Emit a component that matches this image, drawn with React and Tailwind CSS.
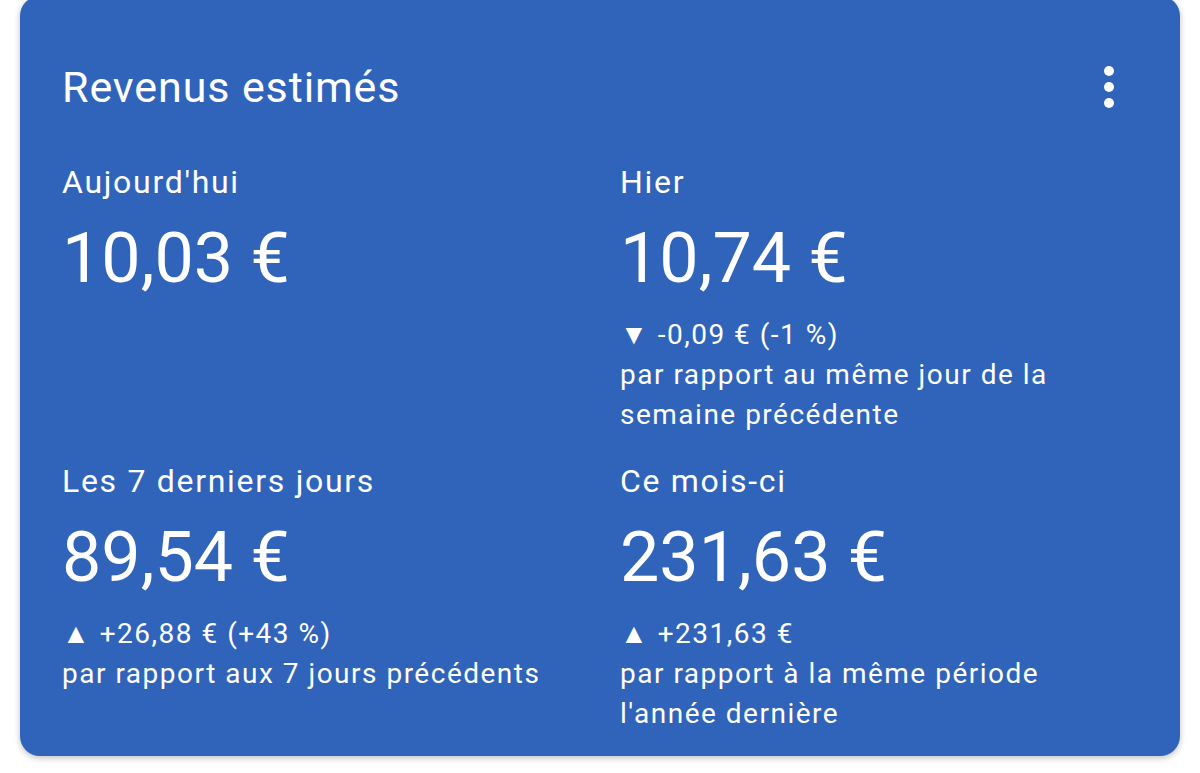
import React from "react";

function Section({ label, value, change, sub }) {
  return (
    <div className="flex flex-col">
      <div className="text-[32px] leading-[40px] tracking-[1.7px]">{label}</div>
      <div className="mt-[16px] text-[70px] leading-[80px] tracking-[0px]">{value}</div>
      {change && (
        <div className="mt-[17px] text-[28px] leading-[40px] tracking-[1.5px]">
          <div>{change}</div>
          {sub.map((s, i) => (
            <div key={i}>{s}</div>
          ))}
        </div>
      )}
    </div>
  );
}

export default function App() {
  return (
    <div className="w-[1200px] h-[773px] bg-white overflow-hidden" style={{ fontFamily: "Roboto, 'Liberation Sans', sans-serif" }}>
      <div className="mx-[20px] -mt-[4px] rounded-[20px] bg-[#3063BA] text-white shadow-[0_2px_6px_rgba(0,0,0,0.25)] pl-[42px] pr-[42px] pt-[65px] pb-[22px]">
        <div className="flex items-center justify-between">
          <div className="text-[43px] leading-[52px] tracking-[0.9px]">Revenus estimés</div>
          <div className="flex flex-col items-center gap-[6px] mr-[24px]">
            <span className="w-[10px] h-[10px] rounded-full bg-white" />
            <span className="w-[10px] h-[10px] rounded-full bg-white" />
            <span className="w-[10px] h-[10px] rounded-full bg-white" />
          </div>
        </div>
        <div className="mt-[49px] grid grid-cols-2 gap-x-[40px] gap-y-[26px]">
          <Section label="Aujourd'hui" value="10,03 €" />
          <Section
            label="Hier"
            value="10,74 €"
            change="▼ -0,09 € (-1 %)"
            sub={["par rapport au même jour de la", "semaine précédente"]}
          />
          <Section
            label="Les 7 derniers jours"
            value="89,54 €"
            change="▲ +26,88 € (+43 %)"
            sub={["par rapport aux 7 jours précédents"]}
          />
          <Section
            label="Ce mois-ci"
            value="231,63 €"
            change="▲ +231,63 €"
            sub={["par rapport à la même période", "l'année dernière"]}
          />
        </div>
      </div>
    </div>
  );
}
